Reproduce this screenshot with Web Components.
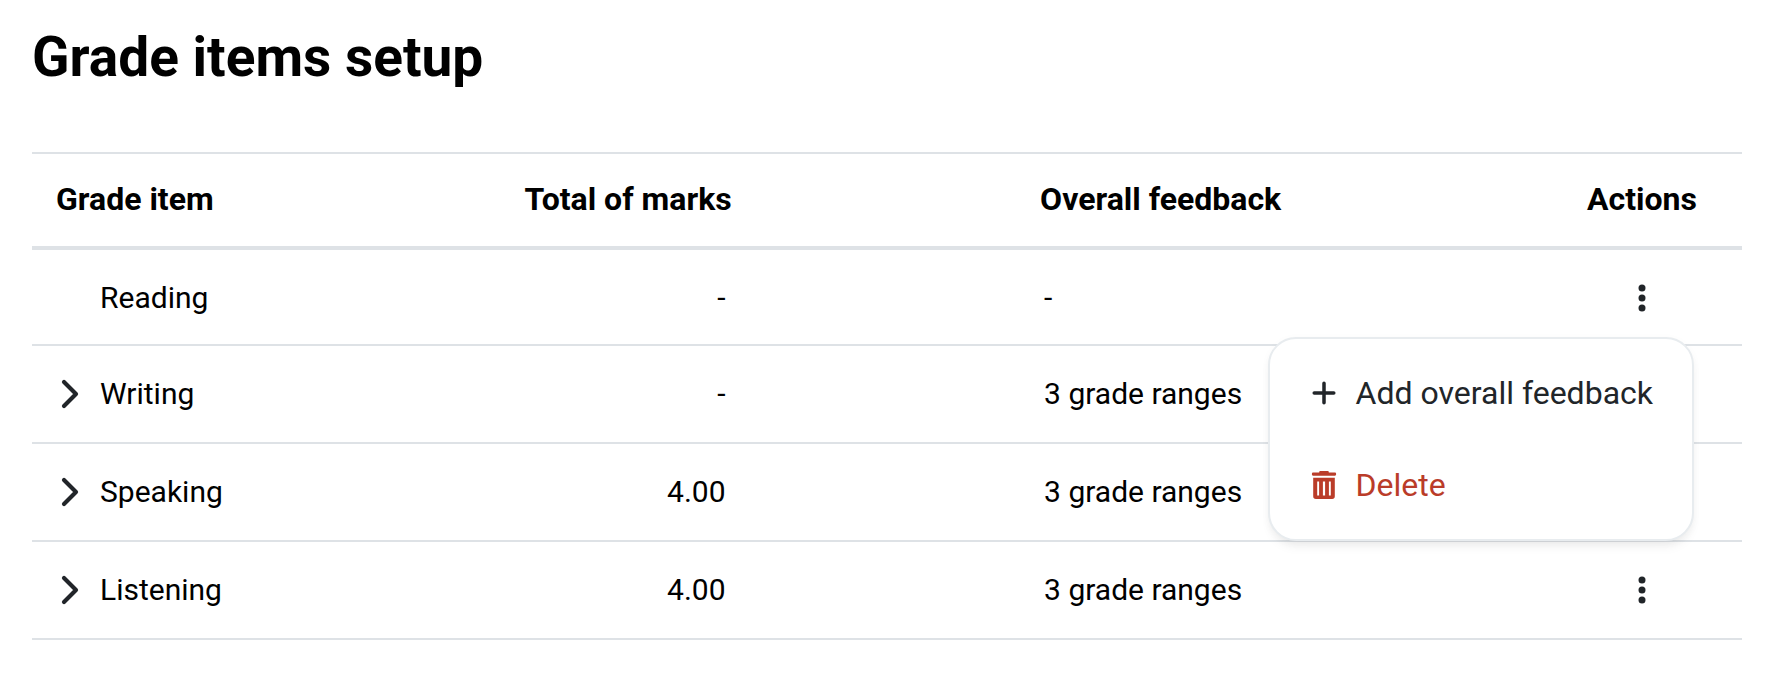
<!DOCTYPE html>
<html lang="en">
<head>
<meta charset="utf-8">
<meta name="viewport" content="width=device-width, initial-scale=1">
<title>Grade items setup</title>
<style>
  body {
    margin: 0;
    background: #fff;
    color: #000;
    font-family: Roboto, "Liberation Sans", sans-serif;
    --line: #dee2e6;
    --ink: #212529;
    --danger: #ba3c29;
  }
</style>
</head>
<body>
<grade-page>
  <span slot="title">Grade items setup</span>
  <grade-table></grade-table>
</grade-page>

<script>
const ICONS = {
  chevron: '<path d="M8 4 20 16 8 28" fill="none" stroke="currentColor" stroke-width="4.2" stroke-linecap="round" stroke-linejoin="round"/>',
  dots: '<circle cx="14" cy="6" r="3.5"/><circle cx="14" cy="16" r="3.5"/><circle cx="14" cy="26" r="3.5"/>',
  plus: '<path d="M14 6.200v19.600M4.200 16h19.600" fill="none" stroke="currentColor" stroke-width="3.500" stroke-linecap="round"/>',
  trash: '<path d="M10.2 1.9h7.6q1 0 1 1v.6H25q1.100 0 1.100 1.200v.9q0 1.100-1.100 1.100H3q-1.100 0-1.100-1.100v-.9Q1.900 3.500 3 3.500h6.200v-.6q0-1 1-1z"/><path fill-rule="evenodd" d="M3.200 8.700h21.600v18.600q0 2.700-2.700 2.700H5.900q-2.700 0-2.700-2.700zM7.200 12.600v13.800h1.900V12.600zM12.900 12.600v13.800h2.200V12.600zM18.900 12.600v13.800h1.900V12.600z"/>'
};

class GradeIcon extends HTMLElement {
  constructor() {
    super();
    this.attachShadow({ mode: 'open' });
  }
  connectedCallback() {
    this.shadowRoot.innerHTML = `
      <style>
        :host { display: block; width: 28px; height: 32px; flex: none; }
        svg { display: block; width: 100%; height: 100%; }
      </style>
      <svg viewBox="0 0 28 32" fill="currentColor" aria-hidden="true">${ICONS[this.getAttribute('name')]}</svg>`;
  }
}
customElements.define('grade-icon', GradeIcon);

class MenuItem extends HTMLElement {
  constructor() {
    super();
    this.attachShadow({ mode: 'open' });
  }
  connectedCallback() {
    this.shadowRoot.innerHTML = `
      <style>
        :host { display: block; color: var(--ink); }
        :host([danger]) { color: var(--danger); }
        button {
          display: flex; align-items: center; gap: 18px;
          width: 100%; padding: 26px 39px 26px 40px;
          border: 0; background: none; color: inherit;
          font: 32px/40px Roboto, "Liberation Sans", sans-serif;
          white-space: nowrap; cursor: pointer;
        }
      </style>
      <button type="button" role="menuitem"><grade-icon name="${this.getAttribute('icon')}"></grade-icon><slot></slot></button>`;
  }
}
customElements.define('menu-item', MenuItem);

class RowActions extends HTMLElement {
  constructor() {
    super();
    this.attachShadow({ mode: 'open' });
  }
  connectedCallback() {
    const open = this.hasAttribute('open');
    this.shadowRoot.innerHTML = `
      <style>
        :host { display: flex; justify-content: center; position: relative; color: var(--ink); }
        .toggle { padding: 8px 10px; border: 0; background: none; color: inherit; cursor: pointer; }
        .menu {
          position: absolute; z-index: 1; top: calc(100% + 15px); right: 48px;
          padding: 8px 0;
          border: 2px solid #e8ecef; border-radius: 28px; background: #fff;
          box-shadow: 0 8px 12px -4px rgba(0, 0, 0, .08), 0 2px 8px rgba(0, 0, 0, .03);
        }
        .menu[hidden] { display: none; }
      </style>
      <button class="toggle" type="button" aria-haspopup="menu" aria-expanded="${open}" aria-label="${this.getAttribute('label')}">
        <grade-icon name="dots"></grade-icon>
      </button>
      <div class="menu" role="menu" ${open ? '' : 'hidden'}><slot></slot></div>`;
    const menu = this.shadowRoot.querySelector('.menu');
    const toggle = this.shadowRoot.querySelector('.toggle');
    toggle.addEventListener('click', () => {
      menu.hidden = !menu.hidden;
      toggle.setAttribute('aria-expanded', String(!menu.hidden));
    });
  }
}
customElements.define('row-actions', RowActions);

class GradeTable extends HTMLElement {
  constructor() {
    super();
    this.attachShadow({ mode: 'open' });
  }
  connectedCallback() {
    const items = [
      { name: 'Reading', marks: '-', feedback: '-', open: true },
      { name: 'Writing', marks: '-', feedback: '3 grade ranges', expandable: true },
      { name: 'Speaking', marks: '4.00', feedback: '3 grade ranges', expandable: true },
      { name: 'Listening', marks: '4.00', feedback: '3 grade ranges', expandable: true }
    ];
    const row = item => `
      <tr>
        <td><div class="item">
          ${item.expandable ? `<button type="button" aria-expanded="false" aria-label="Expand ${item.name}"><grade-icon name="chevron"></grade-icon></button>` : '<span class="spacer"></span>'}
          <span>${item.name}</span>
        </div></td>
        <td><div class="marks">${item.marks}</div></td>
        <td class="feedback">${item.feedback}</td>
        <td class="actions"><row-actions label="Actions for ${item.name}" ${item.open ? 'open' : ''}>
          <menu-item icon="plus">Add overall feedback</menu-item>
          <menu-item icon="trash" danger>Delete</menu-item>
        </row-actions></td>
      </tr>`;
    this.shadowRoot.innerHTML = `
      <style>
        :host { display: block; }
        table { width: 100%; table-layout: fixed; border-collapse: separate; border-spacing: 0; }
        .c-item { width: 27.4%; }
        .c-marks { width: 30.15%; }
        .c-actions { width: 200px; }
        th, td { box-sizing: border-box; padding: 0 24px; text-align: left; vertical-align: middle; }
        th {
          height: 98px; padding-bottom: 2px; font-size: 32px; line-height: 40px; font-weight: 700;
          border-top: 2px solid var(--line); border-bottom: 4px solid var(--line);
        }
        td { height: 98px; font-size: 30px; line-height: 40px; border-bottom: 2px solid var(--line); }
        tbody tr:first-child td { height: 96px; padding-top: 2px; }
        .item { display: flex; align-items: center; gap: 16px; }
        .item button { padding: 0; border: 0; background: none; color: var(--ink); cursor: pointer; }
        .spacer { width: 28px; }
        .marks { width: 201px; text-align: right; }
        .feedback { padding-left: 28px; }
        td.actions, th.actions { padding-left: 0; padding-right: 0; text-align: center; }
      </style>
      <table>
        <colgroup><col class="c-item"><col class="c-marks"><col><col class="c-actions"></colgroup>
        <thead>
          <tr>
            <th scope="col">Grade item</th>
            <th scope="col">Total of marks</th>
            <th scope="col">Overall feedback</th>
            <th scope="col" class="actions">Actions</th>
          </tr>
        </thead>
        <tbody>${items.map(row).join('')}</tbody>
      </table>`;
  }
}
customElements.define('grade-table', GradeTable);

class GradePage extends HTMLElement {
  constructor() {
    super();
    this.attachShadow({ mode: 'open' }).innerHTML = `
      <style>
        :host { display: block; padding: 25px 40px 40px 32px; }
        h1 { margin: 0 0 63px; font-size: 55px; line-height: 64px; font-weight: 700; }
      </style>
      <main><h1><slot name="title"></slot></h1><slot></slot></main>`;
  }
}
customElements.define('grade-page', GradePage);
</script>
</body>
</html>
